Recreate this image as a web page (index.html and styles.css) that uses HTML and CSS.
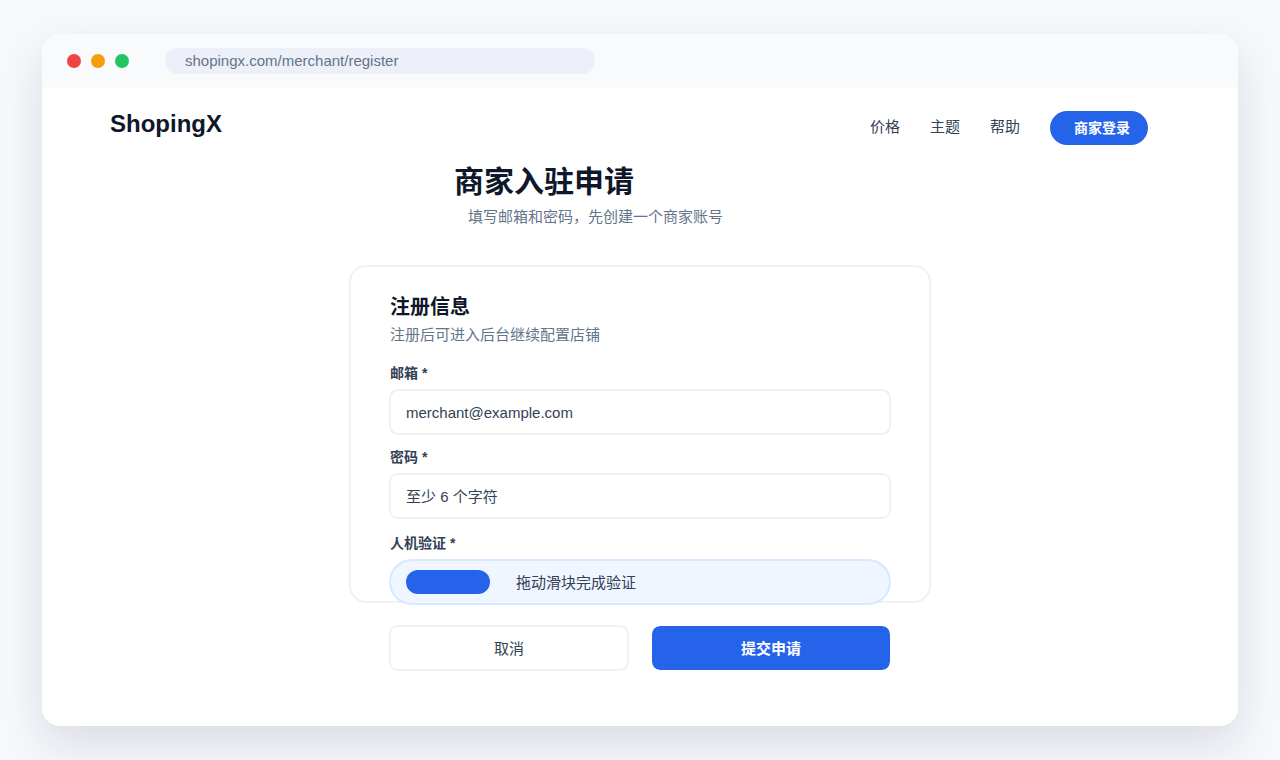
FILE: index.html
```html
<!DOCTYPE html>
<html lang="zh-CN">
<head>
  <meta charset="UTF-8">
  <meta name="viewport" content="width=device-width, initial-scale=1">
  <title>ShopingX 商家入驻申请</title>
  <link rel="stylesheet" href="styles.css">
</head>
<body>
  <div class="window">
    <div class="browser-bar">
      <div class="dots">
        <span class="dot red"></span>
        <span class="dot orange"></span>
        <span class="dot green"></span>
      </div>
      <input class="address" type="text" value="shopingx.com/merchant/register" aria-label="网址" readonly>
    </div>

    <header class="site-header">
      <a class="logo" href="#">ShopingX</a>
      <nav class="nav">
        <a href="#">价格</a>
        <a href="#">主题</a>
        <a href="#">帮助</a>
        <button class="login-button" type="button">商家登录</button>
      </nav>
    </header>

    <main class="content">
      <h1>商家入驻申请</h1>
      <p class="subtitle">填写邮箱和密码，先创建一个商家账号</p>

      <form>
        <section class="card">
          <h2>注册信息</h2>
          <p class="hint">注册后可进入后台继续配置店铺</p>

          <label for="email">邮箱 *</label>
          <input class="field" type="email" id="email" placeholder="merchant@example.com">

          <label for="password">密码 *</label>
          <input class="field" type="password" id="password" placeholder="至少 6 个字符">

          <label class="verify-label" for="verify">人机验证 *</label>
          <div class="slider">
            <input type="range" id="verify" min="0" max="100" value="0">
            <span>拖动滑块完成验证</span>
          </div>
        </section>

        <div class="actions">
          <button class="cancel-button" type="button">取消</button>
          <button class="submit-button" type="submit">提交申请</button>
        </div>
      </form>
    </main>
  </div>
</body>
</html>
```
FILE: styles.css
```css
* {
  box-sizing: border-box;
}
body {
  margin: 0;
  padding: 34px 42px;
  background: #f6f8fc;
  color: #334155;
  font-family: "Liberation Sans", "Noto Sans CJK SC", sans-serif;
  font-size: 15px;
  line-height: 20px;
}
input, button {
  font: inherit;
  color: inherit;
}
button {
  cursor: pointer;
}
a {
  color: inherit;
  text-decoration: none;
}
.window {
  min-height: calc(100vh - 68px);
  background: #fff;
  border-radius: 18px;
  box-shadow: 0 18px 44px rgba(15, 23, 42, 0.12);
}

/* browser bar */
.browser-bar {
  display: flex;
  align-items: center;
  gap: 36px;
  height: 54px;
  padding: 0 25px;
  background: #f8fafc;
  border-radius: 18px 18px 0 0;
}
.dots {
  display: flex;
  gap: 10px;
}
.dot {
  width: 14px;
  height: 14px;
  border-radius: 50%;
}
.red {
  background: #ef4444;
}
.orange {
  background: #f59e0b;
}
.green {
  background: #22c55e;
}
.address {
  width: 430px;
  height: 26px;
  padding: 0 20px 2px;
  border: none;
  border-radius: 13px;
  background: #edf0f8;
  color: #64748b;
}

/* header */
.site-header {
  display: flex;
  align-items: center;
  justify-content: space-between;
  height: 80px;
  padding: 0 90px 0 68px;
}
.logo {
  padding-bottom: 8px;
  color: #0f172a;
  font-size: 24px;
  font-weight: bold;
}
.nav {
  display: flex;
  align-items: center;
  gap: 30px;
}
.nav a {
  padding-bottom: 2px;
}
.login-button {
  width: 98px;
  height: 34px;
  padding: 0 0 0 24px;
  border: none;
  border-radius: 17px;
  background: #2563eb;
  color: #fff;
  font-size: 14px;
  font-weight: bold;
  text-align: left;
  white-space: nowrap;
}

/* register form */
.content {
  max-width: 582px;
  margin: 0 auto;
  padding-bottom: 40px;
}
h1 {
  margin: 0;
  padding-left: 105px;
  color: #0f172a;
  font-size: 30px;
  line-height: 28px;
}
.subtitle {
  margin: 0 0 38px;
  padding: 11px 0 0 119px;
  color: #64748b;
}
.card {
  display: flex;
  flex-direction: column;
  padding: 28px 38px 0;
  border: 2px solid #eef1f7;
  border-radius: 17px;
}
h2, .hint, label {
  padding-left: 1px;
}
h2 {
  margin: 0;
  color: #0f172a;
  font-size: 20px;
  line-height: 24px;
}
.hint {
  margin: 6px 0 18px;
  color: #64748b;
}
label {
  margin-bottom: 6px;
  font-size: 14px;
  font-weight: bold;
}
.verify-label {
  margin-top: 2px;
}
.field {
  width: 100%;
  height: 46px;
  margin-bottom: 12px;
  padding: 0 15px;
  border: 2px solid #eef1f7;
  border-radius: 9px;
  background: #fff;
}
.field::placeholder {
  color: #334155;
  opacity: 1;
}

/* track and text share one grid cell */
.slider {
  display: grid;
  align-items: center;
  height: 46px;
  margin-bottom: -4px;
  padding: 0 15px;
  border: 2px solid #d8e8fe;
  border-radius: 23px;
  background: #eff6ff;
}
.slider input, .slider span {
  grid-area: 1 / 1;
}
.slider input {
  width: 100%;
  height: 24px;
  margin: 0;
  appearance: none;
  background: transparent;
}
.slider input::-webkit-slider-thumb {
  appearance: none;
  width: 84px;
  height: 24px;
  border-radius: 12px;
  background: #2563eb;
}
.slider span {
  padding: 2px 0 0 110px;
  pointer-events: none;
}
.actions {
  display: grid;
  grid-template-columns: 1fr 1fr;
  gap: 22px;
  margin-top: 22px;
  padding: 0 40px;
}
.actions button {
  height: 46px;
  padding: 2px 0 0;
  border-radius: 9px;
}
.cancel-button {
  border: 2px solid #eef1f7;
  background: #fff;
}
.submit-button {
  border: 1px solid #fff;
  background: #2563eb;
  background-clip: padding-box;
  color: #fff;
  font-weight: bold;
}
```
